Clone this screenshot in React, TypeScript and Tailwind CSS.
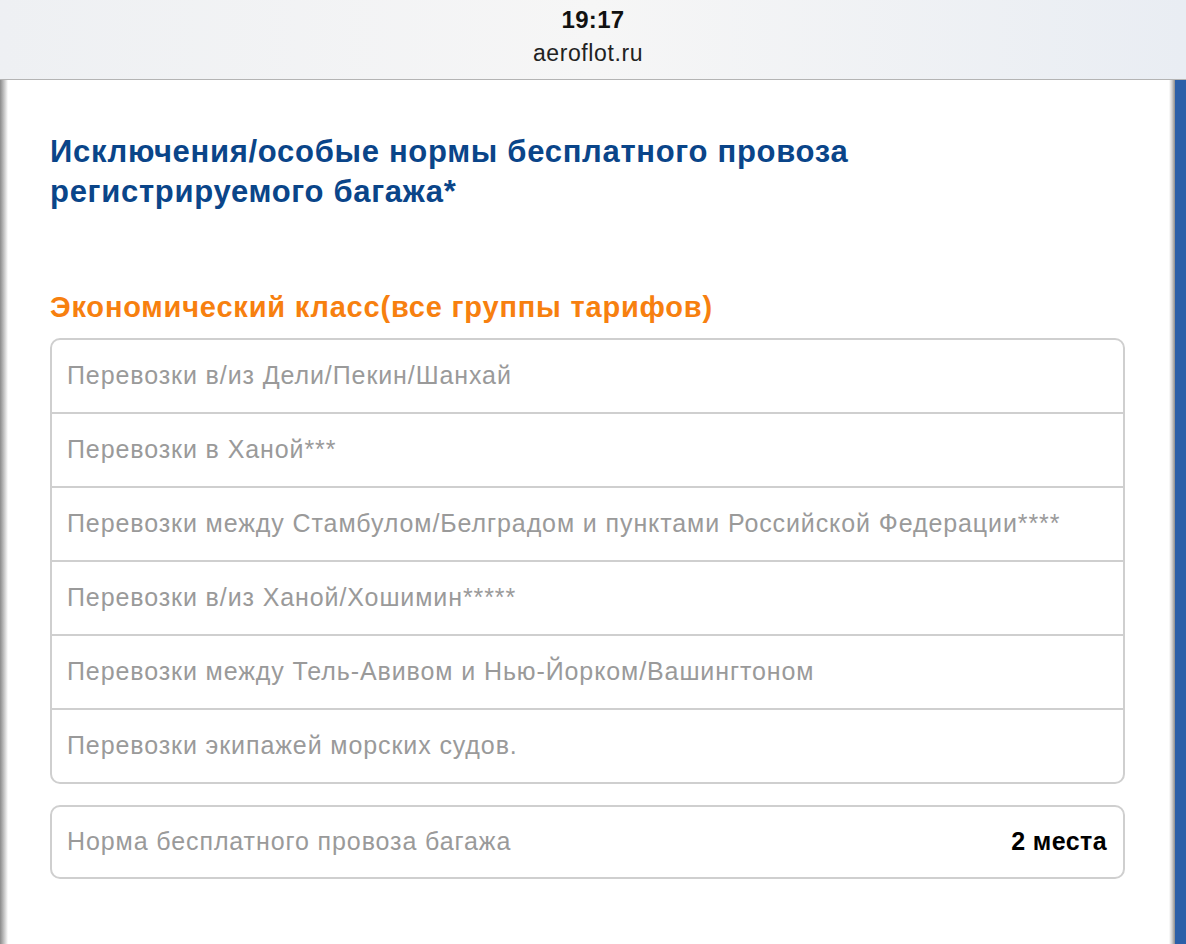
import React from 'react';

const routes = [
  'Перевозки в/из Дели/Пекин/Шанхай',
  'Перевозки в Ханой***',
  'Перевозки между Стамбулом/Белградом и пунктами Российской Федерации****',
  'Перевозки в/из Ханой/Хошимин*****',
  'Перевозки между Тель-Авивом и Нью-Йорком/Вашингтоном',
  'Перевозки экипажей морских судов.',
];

const App = () => {
  return (
    <div className="w-[1186px] h-[944px] overflow-hidden flex flex-col bg-white font-['Liberation_Sans',Arial,sans-serif]">
      {/* browser address bar */}
      <header className="h-[80px] shrink-0 flex flex-col items-center bg-gradient-to-r from-[#eef0f3] via-[#f6f6f6] to-[#e9edf3] border-b border-[#b4b4b4]">
        <div className="mt-[5px] text-[24px] leading-[30px] font-semibold text-[#111] tracking-[0.3px]">19:17</div>
        <div className="mt-[4px] mr-[10px] text-[23px] leading-[28px] text-[#222] tracking-[0.6px]">aeroflot.ru</div>
      </header>

      <div className="flex flex-1 min-h-0">
        <div className="w-[8px] shrink-0 bg-gradient-to-r from-[#8a8a8a] via-[#c4c4c4] to-white" />

        <main className="flex-1 pl-[42px] pr-[44px]">
          <h1 className="mt-[52px] text-[31px] leading-[40px] font-bold text-[#0a4589] tracking-[0.7px]">
            Исключения/особые нормы бесплатного провоза
            <br />
            регистрируемого багажа*
          </h1>

          <h2 className="mt-[78px] text-[29px] leading-[34px] font-bold text-[#f7800f] tracking-[0.8px]">
            Экономический класс(все группы тарифов)
          </h2>

          <ul className="mt-[14px] border-2 border-[#cfcfcf] rounded-[10px] overflow-hidden">
            {routes.map((r, i) => (
              <li
                key={r}
                className={`flex items-center pl-[15px] text-[25px] text-[#9a9a9a] tracking-[0.9px] ${i > 0 ? 'h-[74px] border-t-2 border-[#cfcfcf]' : 'h-[72px]'}`}
              >
                {r}
              </li>
            ))}
          </ul>

          <div className="mt-[21px] h-[74px] border-2 border-[#cfcfcf] rounded-[10px] flex items-center justify-between pl-[15px] pr-[16px]">
            <span className="text-[25px] text-[#9a9a9a] tracking-[0.9px]">Норма бесплатного провоза багажа</span>
            <span className="text-[25px] font-bold text-black tracking-[0.4px]">2 места</span>
          </div>
        </main>

        <div className="w-[6px] shrink-0 bg-gradient-to-r from-white via-[#d0d0d0] to-[#8c8c8c]" />
        <div className="w-[11px] shrink-0 bg-[#2b5fa8]" />
      </div>
    </div>
  );
};

export default App;
